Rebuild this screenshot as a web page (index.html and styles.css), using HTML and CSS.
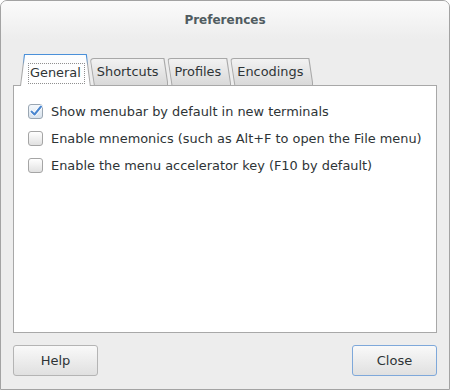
FILE: index.html
```html
<!DOCTYPE html>
<html lang="en">
<head>
    <meta charset="UTF-8">
    <meta name="viewport" content="width=device-width, initial-scale=1.0">
    <link rel="stylesheet" href="styles.css">
    <title>Preferences</title>
</head>
<body>
    <div class="window">
        <div class="titlebar">Preferences</div>

        <div class="content">
            <div class="tabs">
                <div class="tab active"><span class="focus">General</span></div>
                <div class="tab t2">Shortcuts</div>
                <div class="tab t3">Profiles</div>
                <div class="tab t4">Encodings</div>
            </div>

            <div class="panel">
                <label class="row">
                    <span class="check checked">
                        <svg width="17" height="17" viewBox="0 0 17 17">
                            <path d="M4.5 8.5 L7.5 11.5 L14 3.5" fill="none" stroke="#ffffff" stroke-width="3.6" stroke-linecap="round" stroke-linejoin="round"/>
                            <path d="M4.5 8.5 L7.5 11.5 L14 3.5" fill="none" stroke="#4a86cf" stroke-width="2" stroke-linecap="round" stroke-linejoin="round"/>
                        </svg>
                    </span>
                    Show menubar by default in new terminals
                </label>
                <label class="row">
                    <span class="check"></span>
                    Enable mnemonics (such as Alt+F to open the File menu)
                </label>
                <label class="row">
                    <span class="check"></span>
                    Enable the menu accelerator key (F10 by default)
                </label>
            </div>

            <div class="buttons">
                <button class="btn">Help</button>
                <button class="btn default">Close</button>
            </div>
        </div>
    </div>
</body>
</html>
```

FILE: styles.css
```css
body {
    font-family: "DejaVu Sans", sans-serif;
    font-size: 12.9px;
    color: #2e3436;
    margin: 0;
    padding: 0;
}

.window {
    width: 450px;
    height: 390px;
    box-sizing: border-box;
    border: 1px solid #a3a3a3;
    border-radius: 7px 7px 0 0;
    background-color: #ededed;
    overflow: hidden;
}

.titlebar {
    height: 38px;
    line-height: 38px;
    text-align: center;
    font-size: 12px;
    font-weight: bold;
    color: #505c61;
    background: linear-gradient(#fbfbfb, #ededed);
}

.content {
    padding: 15px 12px 13px;
}

/* tabs */
.tabs {
    display: flex;
    align-items: flex-end;
    height: 31px;
    padding-left: 7px;
}

.tab {
    position: relative;
    z-index: 1;
    box-sizing: border-box;
    height: 27px;
    line-height: 16px;
    white-space: nowrap;
    display: flex;
    align-items: flex-end;
    padding: 0 10px 5px 7px;
    margin-left: -1px;
}

.tab::before,
.tab::after {
    content: "";
    position: absolute;
    z-index: -1;
    clip-path: polygon(0 0, calc(100% - 4px) 0, 100% 100%, 4px 100%);
}

.tab::before {
    top: 0;
    left: 0;
    right: 0;
    bottom: 0;
    border-radius: 4px 4px 0 0;
    background-color: #a8a8a8;
}

.tab::after {
    top: 1px;
    left: 1px;
    right: 1px;
    bottom: 0;
    border-radius: 3px 3px 0 0;
    background: linear-gradient(#f2f2f2, #d9d9d9);
}

.t2 { z-index: 4; }
.t3 { z-index: 3; }
.t4 { z-index: 2; }

.tab.active {
    z-index: 5;
    height: 32px;
    margin-left: 0;
    margin-bottom: -1px;
    padding: 0 6px 2px 8px;
}

.tab.active::before,
.tab.active::after {
    clip-path: polygon(4px 0, calc(100% - 4px) 0, 100% 100%, 0 100%);
}

.tab.active::before {
    background: linear-gradient(#4a90d9 0, #4a90d9 3px, #a8a8a8 12px);
}

.tab.active::after {
    background: linear-gradient(#fcfdfe, #ffffff);
}

.focus {
    border: 1px dotted #8f8f8f;
    padding: 1px 3px 2px 1px;
}

/* page */
.panel {
    box-sizing: border-box;
    height: 248px;
    background-color: white;
    border: 1px solid #a8a8a8;
    padding: 12px 14px;
}

.row {
    display: flex;
    align-items: center;
    height: 27px;
    gap: 8px;
    white-space: nowrap;
}

.check {
    position: relative;
    flex-shrink: 0;
    box-sizing: border-box;
    width: 15px;
    height: 15px;
    border: 1px solid #a5a5a5;
    border-radius: 3px;
    background: linear-gradient(#ffffff, #e1e1e1);
}

.check.checked {
    border-color: #9aa6b2;
    background: linear-gradient(#f4f8fc, #d8e2ec);
}

.check svg {
    position: absolute;
    top: -2px;
    left: -2px;
}

/* buttons */
.buttons {
    display: flex;
    justify-content: space-between;
    margin-top: 12px;
}

.btn {
    width: 85px;
    height: 31px;
    font-family: "DejaVu Sans", sans-serif;
    font-size: 13px;
    color: #2e3436;
    border: 1px solid #b4b4b4;
    border-radius: 3px;
    background: linear-gradient(#f9f9f9, #e0e0e0);
    padding: 0;
}

.btn.default {
    border-color: #7ea8da;
}
```
